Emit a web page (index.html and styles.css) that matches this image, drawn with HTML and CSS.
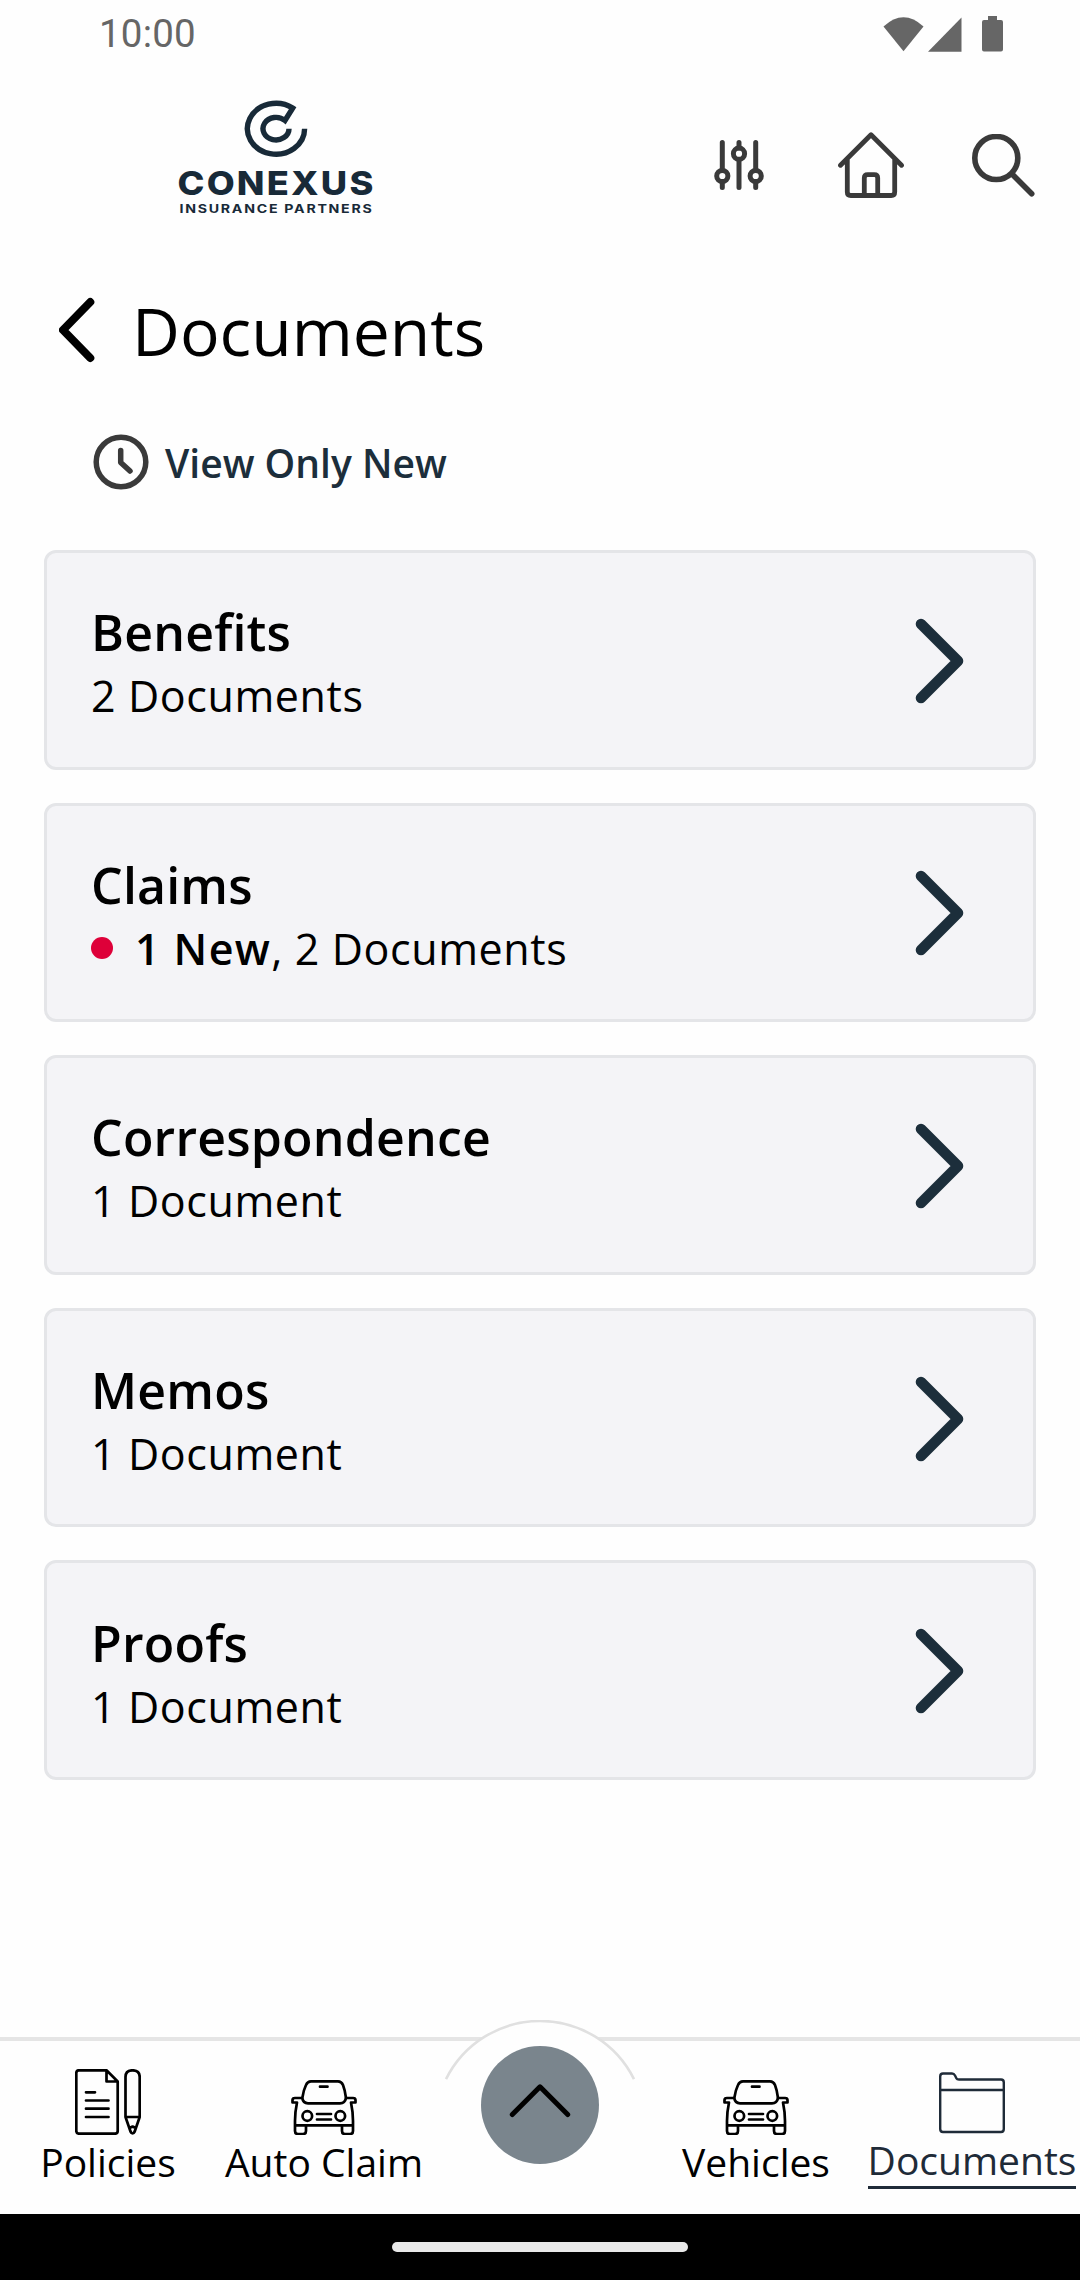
FILE: index.html
```html
<!DOCTYPE html>
<html lang="en">
<head>
<meta charset="UTF-8">
<meta name="viewport" content="width=device-width, initial-scale=1.0">
<title>Documents</title>
<link rel="stylesheet" href="styles.css">
</head>
<body>

<div class="status-bar">
  <span class="time">10:00</span>
  <svg class="status-icons" width="120" height="36" viewBox="0 0 120 36">
    <path d="M0.5 10.5 Q20.500 -8 40.500 10.500 L20.500 35.300 Z"/>
    <path d="M45 35.700 L78.500 1.500 V35.700 Z"/>
    <path d="M105 0 h9 v4 h4 q2 0 2 2 v27.500 q0 2 -2 2 h-17 q-2 0 -2 -2 v-27.500 q0 -2 2 -2 h4 z"/>
  </svg>
</div>

<header class="header">
  <svg class="logo" width="200" height="116" viewBox="0 0 200 116">
    <path class="mark" d="M127.600 28.700 A28.600 25.400 0 1 1 115.700 8.100 L108 20.500 A13 11.300 0 1 0 112 28.700"/>
    <text class="brand" x="0.500" y="95" textLength="198" lengthAdjust="spacingAndGlyphs">CONEXUS</text>
    <text class="tagline" x="2.500" y="112.500" textLength="194" lengthAdjust="spacingAndGlyphs">INSURANCE PARTNERS</text>
  </svg>
  <div class="actions">
    <svg class="icon" width="50" height="50" viewBox="0 0 50 50" stroke-width="5">
      <path d="M8.300 2.500 V30 M8.300 42 V47.500 M25 2.500 V8 M25 20 V47.500 M41.700 2.500 V30 M41.700 42 V47.500"/>
      <circle cx="8.300" cy="36" r="5.600"/>
      <circle cx="25" cy="13.700" r="5.600"/>
      <circle cx="41.700" cy="36" r="5.600"/>
    </svg>
    <svg class="icon home" width="66" height="66" viewBox="0 0 66 66" stroke-width="4.800">
      <path d="M2.500 33.300 L33 2.800 L63.500 33.300 M9.300 27 V60 Q9.300 63.500 12.800 63.500 H53.200 Q56.700 63.500 56.700 60 V27"/>
      <path d="M26.300 63 V46 Q26.300 42.600 29.700 42.600 H36.300 Q39.700 42.600 39.700 46 V63"/>
    </svg>
    <svg class="icon" width="63" height="63" viewBox="0 0 63 63" stroke-width="5.600">
      <circle cx="24.300" cy="24" r="21.500"/>
      <path d="M40 40 L59.700 59.700"/>
    </svg>
  </div>
</header>

<div class="title-row">
  <svg class="back" width="36" height="66" viewBox="0 0 36 66">
    <path d="M31.300 5 L4 33 L31.300 61"/>
  </svg>
  <h1>Documents</h1>
</div>

<div class="filter">
  <svg class="icon" width="56" height="56" viewBox="0 0 56 56" stroke-width="5.500">
    <circle cx="28" cy="28" r="24.800"/>
    <path d="M27.700 16.500 V28.500 L37 37"/>
  </svg>
  <span>View Only New</span>
</div>

<main class="list">
  <div class="card">
    <div class="text">
      <h2>Benefits</h2>
      <p>2 Documents</p>
    </div>
    <svg class="chevron" width="50" height="86" viewBox="0 0 50 86"><path d="M6 6 L43 43 L6 80"/></svg>
  </div>
  <div class="card">
    <div class="text">
      <h2>Claims</h2>
      <p><span class="dot"></span><b>1 New</b>, 2 Documents</p>
    </div>
    <svg class="chevron" width="50" height="86" viewBox="0 0 50 86"><path d="M6 6 L43 43 L6 80"/></svg>
  </div>
  <div class="card">
    <div class="text">
      <h2>Correspondence</h2>
      <p>1 Document</p>
    </div>
    <svg class="chevron" width="50" height="86" viewBox="0 0 50 86"><path d="M6 6 L43 43 L6 80"/></svg>
  </div>
  <div class="card">
    <div class="text">
      <h2>Memos</h2>
      <p>1 Document</p>
    </div>
    <svg class="chevron" width="50" height="86" viewBox="0 0 50 86"><path d="M6 6 L43 43 L6 80"/></svg>
  </div>
  <div class="card">
    <div class="text">
      <h2>Proofs</h2>
      <p>1 Document</p>
    </div>
    <svg class="chevron" width="50" height="86" viewBox="0 0 50 86"><path d="M6 6 L43 43 L6 80"/></svg>
  </div>
</main>

<nav class="tabs">
  <div class="tab">
    <svg width="66" height="66" viewBox="0 0 66 66">
      <path d="M31 1.300 H4 Q1.300 1.300 1.300 4 V62 Q1.300 64.700 4 64.700 H40 Q42.700 64.700 42.700 62 V12.500 L31.500 1.300 V12.500 H42.700"/>
      <path d="M11 23.300 H20 M11 31.500 H33.500 M11 39.700 H33.500 M11 48 H33.500"/>
      <path d="M50.500 48 V8 Q50.500 1.300 57.500 1.300 Q64.700 1.300 64.700 8 V48 Z L55.500 62.500 Q57.600 66.500 59.700 62.500 L64.700 48 M54.500 59 L57.600 57.500 L60.700 59"/>
    </svg>
    <span>Policies</span>
  </div>
  <div class="tab">
    <svg width="66" height="66" viewBox="0 0 66 66">
      <path d="M20 12.300 H47 Q50.500 12.300 52 16 Q54 21 55 29 Q54 34.300 49 34.300 H17 Q12 34.300 11.300 29 Q12.500 21 15 16 Q16.500 12.300 20 12.300 Z"/>
      <path d="M29 17.700 H36.500 M11 29 H4 Q1.500 29 1.500 31 V33.500 H6 Q4 43 4 52 V62 Q4 65 7 65 H12 Q15 65 15 62 V56.300 M55 29 H62 Q64.500 29 64.500 31 V33.500 H60 Q62 43 62 52 V62 Q62 65 59 65 H54 Q51 65 51 62 V56.300 M4 56.300 H62 M26 45 H40 M26 50.500 H40"/>
      <circle cx="16.300" cy="47" r="4.800"/>
      <circle cx="49.300" cy="47" r="4.800"/>
    </svg>
    <span>Auto Claim</span>
  </div>
  <div class="tab middle">
    <!-- raised bump behind the expand button -->
    <svg class="bump" width="192" height="62" viewBox="0 0 192 62">
      <path class="bump-fill" d="M2 59.200 A105 105 0 0 1 190 59.200 Z"/>
      <path class="bump-line" d="M2 59.200 A105 105 0 0 1 190 59.200"/>
    </svg>
    <button class="expand">
      <svg width="62" height="36" viewBox="0 0 62 36"><path d="M3.300 31.500 L31 3.800 L58.700 31.500"/></svg>
    </button>
  </div>
  <div class="tab">
    <svg width="66" height="66" viewBox="0 0 66 66">
      <path d="M20 12.300 H47 Q50.500 12.300 52 16 Q54 21 55 29 Q54 34.300 49 34.300 H17 Q12 34.300 11.300 29 Q12.500 21 15 16 Q16.500 12.300 20 12.300 Z"/>
      <path d="M29 17.700 H36.500 M11 29 H4 Q1.500 29 1.500 31 V33.500 H6 Q4 43 4 52 V62 Q4 65 7 65 H12 Q15 65 15 62 V56.300 M55 29 H62 Q64.500 29 64.500 31 V33.500 H60 Q62 43 62 52 V62 Q62 65 59 65 H54 Q51 65 51 62 V56.300 M4 56.300 H62 M26 45 H40 M26 50.500 H40"/>
      <circle cx="16.300" cy="47" r="4.800"/>
      <circle cx="49.300" cy="47" r="4.800"/>
    </svg>
    <span>Vehicles</span>
  </div>
  <div class="tab active">
    <svg width="66" height="66" viewBox="0 0 66 66">
      <path d="M1.200 8.500 Q1.200 5.500 4 5.500 H13 Q15 5.500 16 7.500 L17.500 10.500 Q18 11.500 20 11.500 H62 Q64.800 11.500 64.800 14.500 V61 Q64.800 64 62 64 H4 Q1.200 64 1.200 61 Z M1.200 22 H64.800"/>
    </svg>
    <span>Documents</span>
  </div>
</nav>

<div class="gesture-bar"><div class="pill"></div></div>

</body>
</html>
```
FILE: styles.css
```css
* {
  box-sizing: border-box;
}

body {
  margin: 0;
  height: 2280px;
  display: flex;
  flex-direction: column;
  background-color: #fefefe;
  color: #000;
  font-family: "Open Sans", "Noto Sans", sans-serif;
}

h1, h2, p {
  margin: 0;
  font-weight: 400;
}

svg {
  display: block;
  flex: none;
  fill: none;
}

/* Status bar */
.status-bar {
  height: 66px;
  padding: 0 77px 0 99px;
  display: flex;
  justify-content: space-between;
}

.time {
  font-family: Roboto, sans-serif;
  font-size: 38.5px;
  line-height: 67px;
  letter-spacing: 0.2px;
  color: #666;
}

.status-icons {
  margin-top: 16px;
  fill: #666;
}

/* Header */
.header {
  height: 198px;
  padding: 0 45px 0 177px;
  display: flex;
  align-items: center;
  justify-content: space-between;
}

.logo {
  margin-top: -15px;
}

.mark {
  stroke: #182a38;
  stroke-width: 5.4;
}

.brand {
  font-family: Inter, sans-serif;
  font-size: 33px;
  font-weight: 800;
  letter-spacing: 2px;
  fill: #182a38;
}

.tagline {
  font-family: Inter, sans-serif;
  font-size: 11.5px;
  font-weight: 700;
  letter-spacing: 1.4px;
  fill: #182a38;
}

.actions {
  display: flex;
  align-items: center;
  gap: 68px;
}

.icon {
  stroke: #3a3a3a;
  stroke-linecap: round;
  stroke-linejoin: round;
}

.home {
  margin-left: 6px;
}

/* Page title */
.title-row {
  height: 132px;
  padding-left: 59px;
  display: flex;
  align-items: center;
  gap: 37px;
}

.back {
  stroke: #000;
  stroke-width: 8;
  stroke-linecap: round;
  stroke-linejoin: round;
}

h1 {
  font-size: 66px;
  line-height: 90px;
}

.filter {
  height: 131px;
  padding: 1px 0 0 93px;
  display: flex;
  align-items: center;
  gap: 16px;
  font-size: 39px;
  font-weight: 600;
  color: #1c2e3b;
}

/* Cards */
.list {
  flex: 1;
  padding: 23px 44px 0;
  display: flex;
  flex-direction: column;
  gap: 33px;
}

.card {
  height: 219.6px;
  padding: 5px 68px 0 44px;
  display: flex;
  align-items: center;
  justify-content: space-between;
  border: 3px solid #e4e5e8;
  border-radius: 12px;
  background-color: #f4f4f7;
}

.card .text {
  padding-top: 4px;
}

.card h2 {
  font-size: 50px;
  font-weight: 600;
  line-height: 64px;
  letter-spacing: 0.2px;
}

.card p {
  font-size: 43px;
  line-height: 64px;
  letter-spacing: 0.6px;
}

.card b {
  font-weight: 600;
  letter-spacing: 1.4px;
}

.dot {
  display: inline-block;
  width: 22px;
  height: 22px;
  margin-right: 22px;
  border-radius: 50%;
  background-color: #de0039;
  vertical-align: 6px;
}

.chevron {
  margin-top: -3px;
  stroke: #1c2e3b;
  stroke-width: 10.6;
  stroke-linecap: round;
  stroke-linejoin: round;
}

/* Bottom tabs */
.tabs {
  height: 177px;
  display: grid;
  grid-template-columns: repeat(5, 1fr);
  border-top: 4px solid #e5e5e5;
}

.tab {
  position: relative;
  padding-top: 28px;
  display: flex;
  flex-direction: column;
  align-items: center;
}

.tab svg {
  stroke: #000;
  stroke-width: 2.7;
  stroke-linecap: round;
  stroke-linejoin: round;
}

.tab span {
  font-size: 39px;
  line-height: 54px;
}

.tab.active {
  padding-top: 27px;
  color: #1f2b38;
}

.tab.active svg {
  stroke: #1f2b38;
  stroke-width: 2.4;
}

.tab.active span {
  line-height: 52px;
  border-bottom: 3px solid #1f2b38;
}

.tab.middle {
  padding-top: 5px;
}

.tab .bump {
  position: absolute;
  top: -21px;
  left: 12px;
  stroke: none;
}

.bump-fill {
  fill: #fefefe;
}

.tab .bump-line {
  stroke: #e0e0e0;
  stroke-width: 2.6;
  stroke-linecap: butt;
}

.expand {
  position: relative;
  width: 118px;
  height: 118px;
  padding: 0 0 8px;
  display: flex;
  align-items: center;
  justify-content: center;
  border: none;
  border-radius: 50%;
  background-color: #7a858d;
}

.tab .expand svg {
  stroke-width: 5;
}

/* Android gesture bar */
.gesture-bar {
  height: 66px;
  display: flex;
  align-items: center;
  justify-content: center;
  background-color: #000;
}

.pill {
  width: 296px;
  height: 10px;
  border-radius: 5px;
  background-color: #e8e8e8;
}
```
